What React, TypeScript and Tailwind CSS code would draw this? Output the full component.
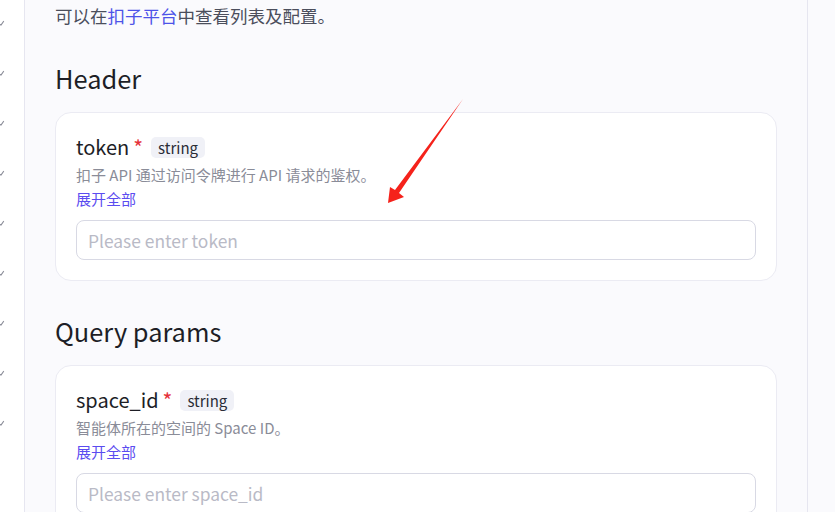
const marks = [23, 73, 123, 173, 223, 273, 323, 373, 423];

function Field({ name, desc, placeholder }: { name: string; desc: string; placeholder: string }) {
  return (
    <div className="rounded-[16px] border border-[#ebebf3] bg-white px-[20px] pt-[20px] pb-[20px]">
      <div className="flex items-center h-[28px]">
        <span className="text-[20px] leading-[28px] text-[#1d1e26]">{name}</span>
        <span className="ml-[4px] text-[21px] leading-[28px] text-[#e5323a]">*</span>
        <span className="ml-[8px] rounded-[5px] bg-[#f0f1f7] px-[7px] text-[15px] leading-[21px] text-[#2a2c36]">string</span>
      </div>
      <div className="mt-[3px] text-[15px] leading-[22px] text-[#8a8c98]">{desc}</div>
      <div className="mt-[2px] text-[15px] leading-[22px] text-[#5b4cf0]">展开全部</div>
      <input
        className="mt-[10px] block h-[40px] w-full rounded-[8px] border border-[#d8d9e4] bg-white px-[11px] text-[17.4px] text-[#1d1e26] outline-none placeholder:text-[#b9bac6]"
        placeholder={placeholder}
      />
    </div>
  );
}

export default function App() {
  return (
    <div
      className="relative flex h-[512px] w-[835px] overflow-hidden bg-[#fafafd]"
      style={{ fontFamily: '"Noto Sans CJK SC", "Noto Sans", sans-serif' }}
    >
      <div className="relative w-[25px] shrink-0 border-r border-[#e6e6f0] bg-white">
        {marks.map((y) => (
          <svg key={y} className="absolute left-0" style={{ top: y - 3 }} width="6" height="6" viewBox="0 0 6 6">
            <path d="M0 4.5 L1 5 L3.5 1.5" stroke="#8b8d99" strokeWidth="1.2" fill="none" strokeLinecap="round" />
          </svg>
        ))}
      </div>
      <div className="w-[783px] shrink-0 border-r border-[#e6e6f0] bg-[#fafafd] pl-[30px] pr-[30px] pt-[4px]">
        <div className="text-[17.5px] leading-[24px] text-[#4b4e5c]">
          可以在<span className="text-[#4d53e8]">扣子平台</span>中查看列表及配置。
        </div>
        <div className="mt-[32px] text-[25.4px] leading-[36px] text-[#1d1e26]">Header</div>
        <div className="mt-[16px]">
          <Field name="token" desc="扣子 API 通过访问令牌进行 API 请求的鉴权。" placeholder="Please enter token" />
        </div>
        <div className="mt-[32px] text-[25.4px] leading-[36px] text-[#1d1e26]">Query params</div>
        <div className="mt-[16px]">
          <Field name="space_id" desc="智能体所在的空间的 Space ID。" placeholder="Please enter space_id" />
        </div>
      </div>
      <div className="flex-1 bg-[#fafafd]" />
      <svg className="pointer-events-none absolute left-0 top-0" width="835" height="512">
        <polygon points="463,99 399,193 404,197 388,203 390,187 395,190" fill="#f5221b" />
      </svg>
    </div>
  );
}
